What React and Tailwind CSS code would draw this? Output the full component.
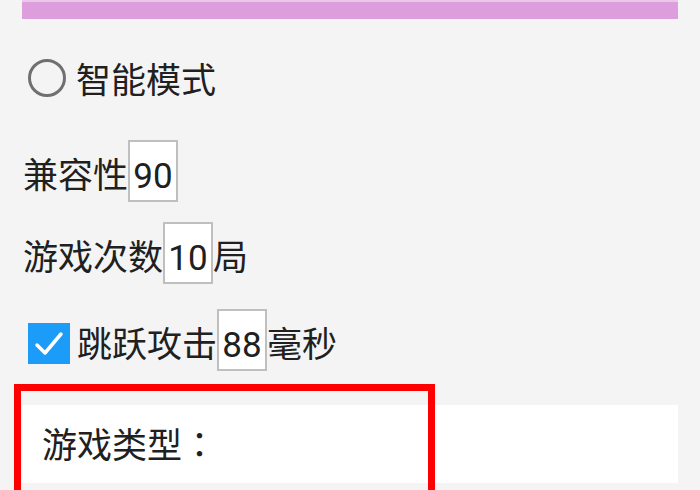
import React from "react";

const font = "font-['Roboto','Noto_Sans_CJK_SC',sans-serif]";

// small boxed number field, like an Android EditText
function NumBox({ value }) {
  return (
    <span className="h-[62px] w-[50px] border-2 border-[#bfbfbf] bg-white flex items-end justify-center pb-[6px] leading-none">
      {value}
    </span>
  );
}

function Label({ children }) {
  return <span className="leading-none mb-[8px]">{children}</span>;
}

export default function App() {
  return (
    <div className={`relative w-[700px] h-[490px] overflow-hidden bg-[#f4f4f4] text-[35px] text-[#202020] ${font}`}>
      <div className="mx-[22px] h-[19px] bg-[#dc9edc] border-t-2 border-[#ebc7ea]" />

      {/* radio */}
      <div className="mt-[39px] pl-[28px] flex items-center h-[40px]">
        <span className="w-[38px] h-[38px] rounded-full border-[3px] border-[#707070]" />
        <span className="ml-[10px] mt-[6px] leading-none">智能模式</span>
      </div>

      <div className="mt-[42px] pl-[23px] flex items-end h-[62px]">
        <Label>兼容性</Label>
        <NumBox value="90" />
      </div>

      <div className="mt-[20px] pl-[23px] flex items-end h-[62px]">
        <Label>游戏次数</Label>
        <NumBox value="10" />
        <Label>局</Label>
      </div>

      <div className="mt-[25px] pl-[28px] flex items-end h-[62px]">
        <span className="w-[42px] h-[41px] mb-[7px] bg-[#1a9cf8] flex items-center justify-center">
          <svg width="34" height="30" viewBox="0 0 34 30">
            <path d="M5 16 L13 24 L29 5" fill="none" stroke="#fff" strokeWidth="3.5" strokeLinecap="round" strokeLinejoin="round" />
          </svg>
        </span>
        <span className="ml-[7px] leading-none mb-[8px]">跳跃攻击</span>
        <NumBox value="88" />
        <Label>毫秒</Label>
      </div>

      <div className="mt-[34px] mx-[22px] h-[78px] bg-white flex items-center pl-[20px]">
        <span className="leading-none">
          游戏类型<span className="font-['Noto_Sans_CJK_TC',sans-serif]">：</span>
        </span>
      </div>

      {/* red highlight annotation */}
      <div className="absolute left-[14px] top-[384px] w-[421px] h-[130px] border-[7px] border-[#ff0000]" />
    </div>
  );
}
